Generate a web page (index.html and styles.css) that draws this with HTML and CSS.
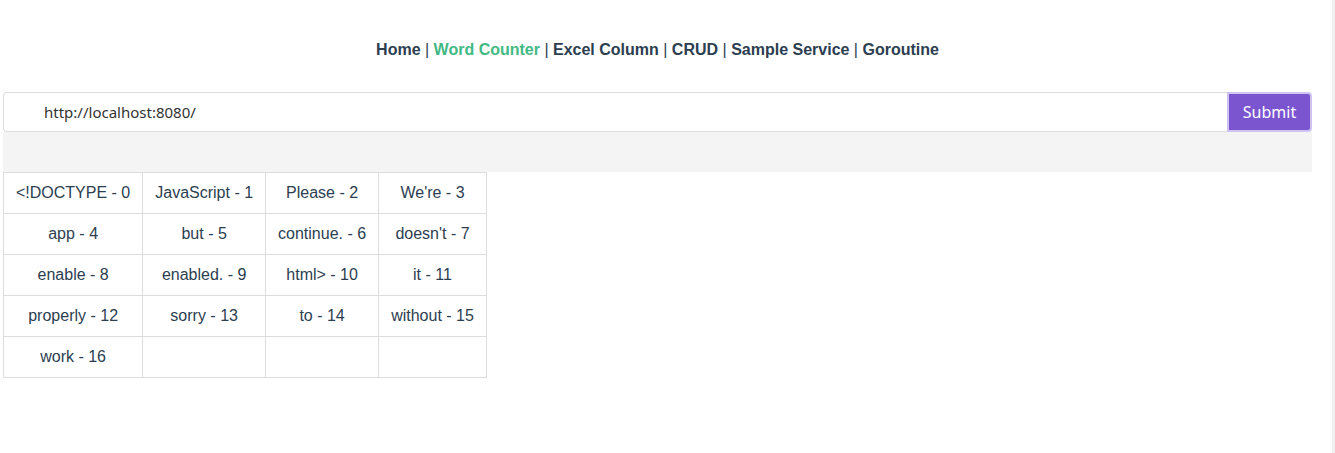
FILE: index.html
```html
<!DOCTYPE html>
<html>
<head>
<meta charset="utf-8">
<link rel="stylesheet" href="styles.css">
</head>
<body>
<div class="page">
  <nav class="nav">
    <a class="link">Home</a><span class="sep"> | </span><a class="link active">Word Counter</a><span class="sep"> | </span><a class="link">Excel Column</a><span class="sep"> | </span><a class="link">CRUD</a><span class="sep"> | </span><a class="link">Sample Service</a><span class="sep"> | </span><a class="link">Goroutine</a>
  </nav>
  <form class="form">
    <input class="url" type="text" value="http://localhost:8080/">
    <button class="submit" type="button">Submit</button>
  </form>
  <div class="band"></div>
  <table class="words">
    <tr><td>&lt;!DOCTYPE - 0</td><td>JavaScript - 1</td><td>Please - 2</td><td>We're - 3</td></tr>
    <tr><td>app - 4</td><td>but - 5</td><td>continue. - 6</td><td>doesn't - 7</td></tr>
    <tr><td>enable - 8</td><td>enabled. - 9</td><td>html&gt; - 10</td><td>it - 11</td></tr>
    <tr><td>properly - 12</td><td>sorry - 13</td><td>to - 14</td><td>without - 15</td></tr>
    <tr><td>work - 16</td><td></td><td></td><td></td></tr>
  </table>
</div>
</body>
</html>
```

FILE: styles.css
```css
html, body {
  margin: 0;
  padding: 0;
  background: #fff;
}
body {
  width: 1332px;
  height: 453px;
  border-right: 3px solid #f0f0f0;
  box-sizing: content-box;
  font-family: "Liberation Sans", Arial, sans-serif;
  color: #2c3e50;
}
.page {
  padding: 41px 20px 0 3px;
}
.nav {
  text-align: center;
  font-weight: bold;
  font-size: 16px;
  line-height: 18px;
  color: #2c3e50;
}
.sep {
  font-weight: normal;
}
.link {
  color: #2c3e50;
  text-decoration: none;
}
.link.active {
  color: #42b983;
}
.form {
  display: flex;
  margin: 33px 0 0 0;
  height: 40px;
}
.url {
  flex: 1;
  height: 40px;
  box-sizing: border-box;
  border: 1px solid #dcdcdc;
  border-right: none;
  border-radius: 4px 0 0 4px;
  padding: 0 0 0 40px;
  font-family: "Noto Sans", "Open Sans", sans-serif;
  font-size: 15px;
  color: #333;
  outline: none;
}
.submit {
  width: 85px;
  height: 40px;
  box-sizing: border-box;
  border: 2px solid #cfc3f2;
  border-radius: 0 4px 4px 0;
  background: #7b55d0;
  color: #fff;
  font-family: "Noto Sans", "Open Sans", sans-serif;
  font-size: 16px;
  padding: 0;
}
.band {
  height: 40px;
  background: #f4f4f4;
}
.words {
  border-collapse: collapse;
  font-size: 16px;
  color: #2c3e50;
}
.words td {
  border: 1px solid #dddddd;
  padding: 11px 12px;
  line-height: 18px;
  height: 18px;
  text-align: center;
  white-space: nowrap;
}
```
